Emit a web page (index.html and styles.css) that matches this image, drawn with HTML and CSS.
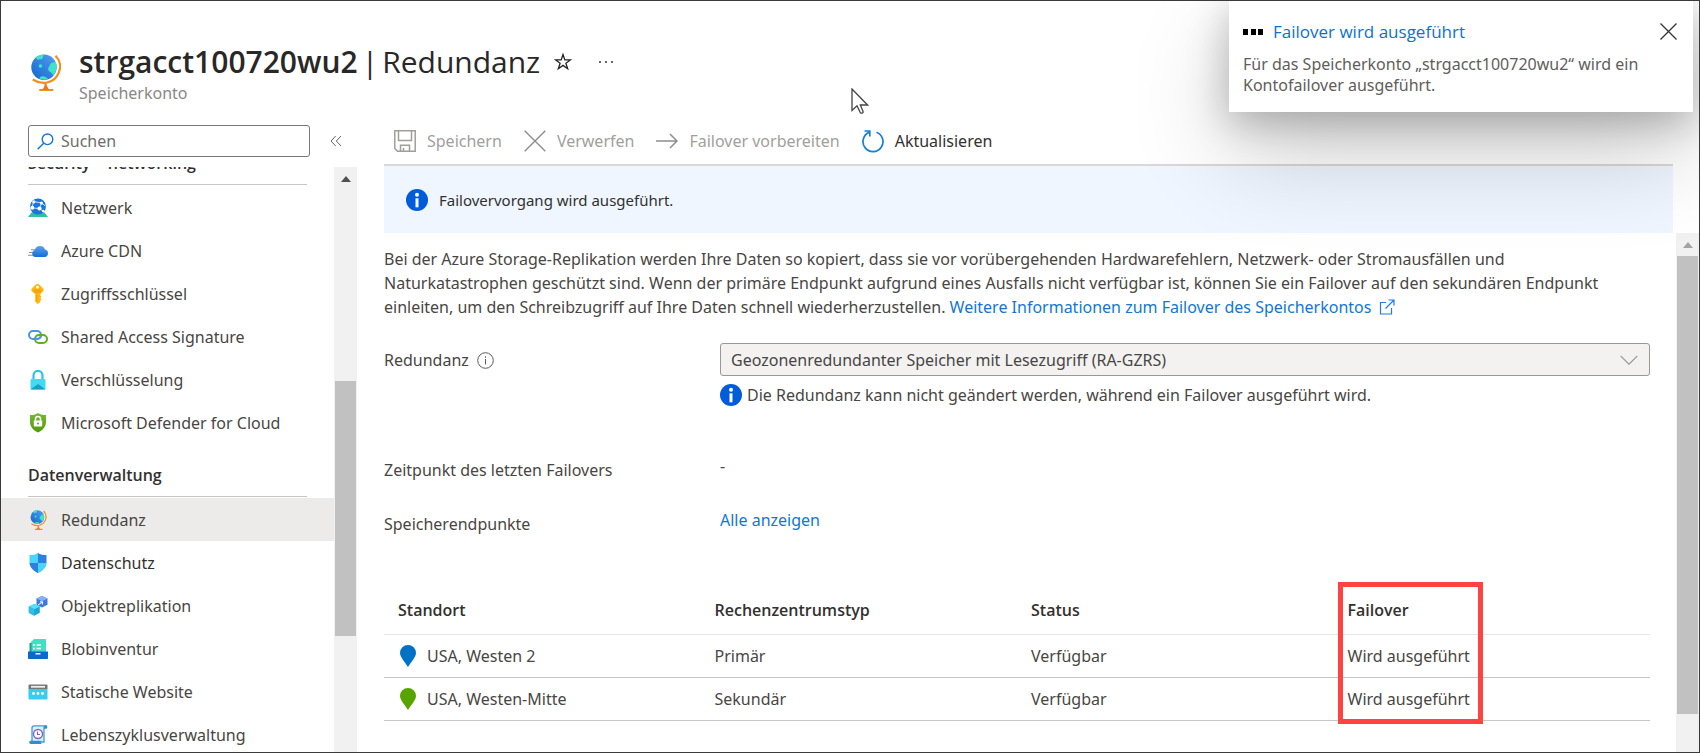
FILE: index.html
```html
<!DOCTYPE html>
<html lang="de">
<head>
<meta charset="utf-8">
<title>strgacct100720wu2 | Redundanz</title>
<link rel="stylesheet" href="styles.css">
</head>
<body>
<svg class="defs" aria-hidden="true">
  <defs>
    <linearGradient id="g-blue" x1="0" y1="0" x2="0" y2="1"><stop offset="0" stop-color="#5ea0ef"/><stop offset="1" stop-color="#0f6fd6"/></linearGradient>
    <linearGradient id="g-globe" x1="1" y1="0" x2="0" y2="1"><stop offset="0" stop-color="#559ff0"/><stop offset="1" stop-color="#1266cf"/></linearGradient>
    <linearGradient id="g-green" x1="0" y1="0" x2="0" y2="1"><stop offset="0" stop-color="#76bc2d"/><stop offset="1" stop-color="#4e9a0c"/></linearGradient>
    <symbol id="globe" viewBox="0 0 30 37">
      <circle cx="13" cy="13.300" r="12.700" fill="url(#g-globe)"/>
      <path d="M5 3.500C8 .8 11 .4 12.500.8c-.5 1.500-.3 3.400-1.600 4.300-1.200.6-1.900-.3-3 .3-.9.9-1.500.8-2.900-1.900zM25 8.500c1.300 4 .7 9-2.500 12.500-1.500-.2-1.400-2.200-3-3-1.800-.8-2.800-2-2.200-4 .4-1.500 1.500-1.700 1.600-3 .2-1.800 3.400-3.500 6.100-2.500zM8.500 24.500c.4-1.700 2-2.600 3.600-2.200 1.700.3 3.500.5 4.900 2.800-3 .8-5.500.8-8.500-.6z" fill="#3fe3c5"/>
      <circle cx="9.500" cy="12" r="1.800" fill="#3fe3c5"/>
      <path d="M24.500 1.800C29 6.500 30.300 13 27.500 19.200 23.500 28.500 12 32 1.800 25.500" fill="none" stroke="#f78d1e" stroke-width="2.200"/>
      <path d="M14.500 29v4M8.300 36h14" stroke="#f78d1e" stroke-width="2.200"/>
      <path d="M14.800 30l3.500 6h-7z" fill="#f2761c"/>
    </symbol>
    <symbol id="info" viewBox="0 0 22 22">
      <circle cx="11" cy="11" r="11" fill="#015cda"/>
      <circle cx="11" cy="5.800" r="2" fill="#fff"/>
      <path d="M9.500 9.300h3v9h-3z" fill="#fff"/>
    </symbol>
    <symbol id="pin" viewBox="0 0 16 22"><path d="M8 0a8 8 0 0 1 8 8c0 4-5 9-8 14C5 17 0 12 0 8a8 8 0 0 1 8-8z" fill="currentColor"/></symbol>
  </defs>
</svg>

<div class="app">
  <header class="header">
    <svg class="header-icon" aria-hidden="true"><use href="#globe"/></svg>
    <div class="heading">
      <div class="title-row">
        <h1><strong>strgacct100720wu2</strong><span>|</span><span>Redundanz</span></h1>
        <button class="icon-btn" aria-label="Favorit">
          <svg width="18" height="18" viewBox="0 0 18 18" fill="none" stroke="#222" stroke-width="1.300"><path d="M9 1.500l1.800 5.400h5.700l-4.600 3.400 1.700 5.400L9 12.400l-4.600 3.300 1.700-5.400-4.600-3.400h5.700z"/></svg>
        </button>
        <button class="icon-btn more" aria-label="Mehr">
          <svg width="16" height="4" viewBox="0 0 16 4" fill="#333"><circle cx="2" cy="2" r="1"/><circle cx="8" cy="2" r="1"/><circle cx="14" cy="2" r="1"/></svg>
        </button>
      </div>
      <p class="subtitle">Speicherkonto</p>
    </div>
  </header>

  <aside class="sidebar">
    <div class="search-row">
      <label class="search">
        <svg width="17" height="17" viewBox="0 0 17 17" fill="none" stroke="#1078d4" stroke-width="1.400" aria-hidden="true"><circle cx="10.500" cy="6.300" r="5.300"/><path d="M6.700 10.200L.6 16.300"/></svg>
        <input type="text" placeholder="Suchen" aria-label="Suchen">
      </label>
      <button class="icon-btn collapse" aria-label="Menü reduzieren">
        <svg width="12" height="12" viewBox="0 0 12 12" fill="none" stroke="#666" stroke-width="1"><path d="M5.700 1L1 6l4.700 5M11 1L6.300 6 11 11"/></svg>
      </button>
    </div>
    <div class="menu-wrap">
      <nav class="menu">
        <h2 class="first">Security + networking</h2>
        <ul>
          <li><a href="#"><svg viewBox="0 0 20 20"><path d="M3.500 14.500h13l3.500 4.500H0z" fill="#2fc0a0"/><circle cx="10" cy="8.500" r="8" fill="#1b74dc"/><g stroke="#bfe0ff" stroke-width="1" fill="none"><path d="M5.500 3.500l8 1.500M13.500 5l-2 5.500M11.500 10.500L4 10M11.500 10.500l4 3M5.500 3.500L4 10M13.500 5l4 3"/></g><g fill="#fff"><circle cx="5.800" cy="3.800" r="1.600"/><circle cx="13.500" cy="5" r="1.500"/><circle cx="4.300" cy="9.800" r="2"/><circle cx="11.500" cy="10.500" r="2.100"/><circle cx="15.300" cy="13" r="1.300"/></g></svg>Netzwerk</a></li>
          <li><a href="#"><svg viewBox="0 0 20 20"><path d="M3 8.800h5M1 11.500h6M0 14.200h7" stroke="#8d8d8d" stroke-width="1.100"/><path d="M7.500 16a3.500 3.500 0 0 1-.6-6.900A5.300 5.300 0 0 1 17 8.500a3.800 3.800 0 0 1-.5 7.500z" fill="url(#g-blue)"/></svg>Azure CDN</a></li>
          <li><a href="#"><svg viewBox="0 0 20 20"><path d="M9.500 0c1 0 2 .6 3 1.700l2.400 2.500c1 1 1 2.300.1 3.300L12.300 10v1.500l1.200 1.200-1.200 1.200 1.200 1.300-1.200 1.300v1.700L9.500 20l-2.300-2.300V10L4 7.500c-.9-1-.9-2.200.1-3.300l2.400-2.500C7.500.6 8.500 0 9.500 0z" fill="#ffb70f"/><circle cx="9.500" cy="3" r="1.500" fill="#fff"/><path d="M6 6.200h7M6 8h7" stroke="#f08c00" stroke-width=".8"/><path d="M8.800 11v6" stroke="#ff9300"/></svg>Zugriffsschlüssel</a></li>
          <li><a href="#"><svg viewBox="0 0 20 20" fill="none" stroke-width="2"><rect x="1" y="4" width="12" height="8" rx="4" stroke="#4a93ec"/><rect x="7" y="8" width="12" height="8" rx="4" stroke="#62ad1f"/><path d="M13 8a4 4 0 0 1-4 4H6" stroke="#4a93ec"/></svg>Shared Access Signature</a></li>
          <li><a href="#"><svg viewBox="0 0 20 20"><path d="M5.500 10V5.500a4.500 4.500 0 0 1 9 0V10" fill="none" stroke="#26c3ea" stroke-width="2.200"/><rect x="2.500" y="9" width="15" height="10.500" rx="1" fill="#43d9fa"/><path d="M2.500 19.500L10 14l7.500 5.500z" fill="#1b9ec4"/></svg>Verschlüsselung</a></li>
          <li><a href="#"><svg viewBox="0 0 20 20"><path d="M10 0c2.500 1.700 5 2 8 2v7c0 5.500-4.500 8.800-8 10.500C6.500 17.800 2 14.500 2 9V2c3 0 5.500-.3 8-2z" fill="url(#g-green)"/><rect x="5.800" y="7.500" width="8.400" height="6" rx=".8" fill="#fff"/><path d="M7.500 8V6a2.500 2.500 0 0 1 5 0v2" fill="none" stroke="#fff" stroke-width="1.500"/><circle cx="10" cy="10.500" r="1" fill="#59a514"/></svg>Microsoft Defender for Cloud</a></li>
        </ul>
        <h2>Datenverwaltung</h2>
        <ul>
          <li><a href="#" class="active" aria-current="page"><svg viewBox="0 0 20 20"><use href="#globe" x="2" y="0" width="17" height="20"/></svg>Redundanz</a></li>
          <li><a href="#" class="visited"><svg viewBox="0 0 20 20"><path d="M10 0c2.500 1.700 5 2 8.500 2v7c0 5.500-5 9.300-8.500 11z" fill="#2f7fe0"/><path d="M10 0C7.500 1.700 5 2 1.500 2v7c0 5.500 5 9.300 8.500 11z" fill="#48d6f8"/><path d="M1.500 10H10v10C6.500 18.300 2 15 1.500 10z" fill="#2f7fe0"/><path d="M18.500 10H10v10c3.500-1.700 8-5 8.500-10z" fill="#48d6f8"/></svg>Datenschutz</a></li>
          <li><a href="#"><svg viewBox="0 0 20 20"><path d="M14 0l5.500 2.500v6.300L14 11.500 8.500 8.800V2.500z" fill="#3c78e0"/><path d="M14 0l5.500 2.500L14 5.300 8.500 2.500z" fill="#84b1f5"/><path d="M6.300 8l5.500 2.500v6.200L6.300 19.700.8 16.800v-6.300z" fill="#1fa7d4"/><path d="M6.300 8l5.500 2.500-5.500 2.800-5.500-2.800z" fill="#50e2f7"/><path d="M.8 10.500l5.500 2.800v6.400L.8 16.800z" fill="#30bfe6"/><path d="M10 9l4.500-3M12 5.800l2.700.1-.4 2.600" stroke="#fff" fill="none" stroke-width="1"/></svg>Objektreplikation</a></li>
          <li><a href="#"><svg viewBox="0 0 20 20"><path d="M6 0h11c.6 0 1 .4 1 1v12H3V3z" fill="#42e0c3"/><path d="M1.500 4h2v9h-2z" fill="#1a9f88"/><path d="M5 6h2M8.500 6H13M5 9.500h2M8.500 9.500H13" stroke="#fff" stroke-width="1.400"/><path d="M0 12.500h20V19c0 .6-.4 1-1 1H1c-.6 0-1-.4-1-1z" fill="#0b68cf"/><path d="M7.500 14.800h5" stroke="#fff" stroke-width="1.400"/></svg>Blobinventur</a></li>
          <li><a href="#"><svg viewBox="0 0 20 20"><path d="M.5 7h19v9.500c0 .6-.4 1-1 1h-17c-.6 0-1-.4-1-1z" fill="#37cdf3"/><path d="M1.500 2.500h17c.6 0 1 .4 1 1V7H.5V3.500c0-.6.400-1 1-1z" fill="#767676"/><path d="M3 4.800h14" stroke="#eee" stroke-width="1.800"/><g fill="#fff"><circle cx="5.500" cy="11.500" r="1.400"/><circle cx="10" cy="11.500" r="1.400"/><circle cx="14.500" cy="11.500" r="1.400"/></g></svg>Statische Website</a></li>
          <li><a href="#"><svg viewBox="0 0 20 20"><path d="M6 .8h12v1.700h-2V17H4V3c0-1.200.8-2.200 2-2.200z" fill="#d9effb" stroke="#3b9fd1" stroke-width="1.300"/><path d="M18 .3a1.800 1.800 0 0 1 0 3.500h-1.800V1zM2.500 15.700H13c-.6 1.200-.2 2.700 1 3.300H2.500a1.700 1.700 0 0 1 0-3.300z" fill="#2f8fc6"/><circle cx="10" cy="9" r="4.500" fill="#fff" stroke="#8661c5" stroke-width="1.400"/><path d="M9.500 6.500v3H12" fill="none" stroke="#8661c5" stroke-width="1.200"/></svg>Lebenszyklusverwaltung</a></li>
        </ul>
      </nav>
      <div class="scrollbar" aria-hidden="true"><i class="arrow"></i><i class="thumb"></i></div>
    </div>
  </aside>

  <main class="main">
    <div class="toolbar">
      <button disabled><svg width="22" height="22" viewBox="0 0 22 22" fill="none" stroke="#a09e9c" stroke-width="1.500"><path d="M.8.800h20.400v20.400H3.500L.8 18.500zM4.500 1v9.500h13V1M6.500 21v-5.700h9V21M9.500 21v-3"/></svg>Speichern</button>
      <button disabled><svg width="22" height="22" viewBox="0 0 22 22" fill="none" stroke="#8f8d8b" stroke-width="1.400"><path d="M.7.700l20.600 20.600M21.300.700L.7 21.300"/></svg>Verwerfen</button>
      <button disabled><svg width="22" height="22" viewBox="0 0 22 22" fill="none" stroke="#8f8d8b" stroke-width="1.500"><path d="M0 11h21M14 4l7 7-7 7"/></svg>Failover vorbereiten</button>
      <button><svg width="22" height="24" viewBox="0 0 22 24" fill="none" stroke="#1080dc" stroke-width="1.700"><path d="M14.500 3.200A10 10 0 1 1 7 3.400M2.500 2h5.300v5.500"/></svg>Aktualisieren</button>
    </div>
    <div class="banner" role="status"><svg width="22" height="22" aria-hidden="true"><use href="#info"/></svg>Failovervorgang wird ausgeführt.</div>
    <div class="body">
      <div class="content">
        <p class="intro">Bei der Azure Storage-Replikation werden Ihre Daten so kopiert, dass sie vor vorübergehenden Hardwarefehlern, Netzwerk- oder Stromausfällen und Naturkatastrophen geschützt sind. Wenn der primäre Endpunkt aufgrund eines Ausfalls nicht verfügbar ist, können Sie ein Failover auf den sekundären Endpunkt einleiten, um den Schreibzugriff auf Ihre Daten schnell wiederherzustellen. <a href="#">Weitere Informationen zum Failover des Speicherkontos<svg class="ext" width="16" height="16" viewBox="0 0 16 16" fill="none" stroke="#1b7fdb" stroke-width="1.200" aria-hidden="true"><path d="M7 3.500H1.500V15h11V9M6.500 9.500l8-8M9.500 1h5.500v5.500"/></svg></a></p>
        <div class="fields">
          <div class="label"><label for="redundancy">Redundanz</label><svg width="17" height="17" viewBox="0 0 17 17" fill="none" stroke="#5c5c5c" aria-hidden="true"><circle cx="8.500" cy="8.500" r="7.800"/><path d="M8.500 7v5.500M8.500 4.300v1.500"/></svg></div>
          <div class="control">
            <div class="select-wrap">
              <select id="redundancy" disabled><option>Geozonenredundanter Speicher mit Lesezugriff (RA-GZRS)</option></select>
              <svg class="caret" width="18" height="10" viewBox="0 0 18 10" fill="none" stroke="#9a9896" stroke-width="1.200" aria-hidden="true"><path d="M.6.800L9 9.200 17.400.8"/></svg>
            </div>
            <p class="hint"><svg width="22" height="22" aria-hidden="true"><use href="#info"/></svg>Die Redundanz kann nicht geändert werden, während ein Failover ausgeführt wird.</p>
          </div>
          <div class="label">Zeitpunkt des letzten Failovers</div>
          <div class="value">-</div>
          <div class="label">Speicherendpunkte</div>
          <div class="value"><a href="#">Alle anzeigen</a></div>
        </div>
        <div class="table-wrap">
          <table>
            <thead><tr><th>Standort</th><th>Rechenzentrumstyp</th><th>Status</th><th><span class="mark-anchor">Failover<i class="mark"></i></span></th></tr></thead>
            <tbody>
              <tr><td><span class="loc"><svg class="blue" width="16" height="22"><use href="#pin"/></svg>USA, Westen 2</span></td><td>Primär</td><td>Verfügbar</td><td>Wird ausgeführt</td></tr>
              <tr><td><span class="loc"><svg class="green" width="16" height="22"><use href="#pin"/></svg>USA, Westen-Mitte</span></td><td>Sekundär</td><td>Verfügbar</td><td>Wird ausgeführt</td></tr>
            </tbody>
          </table>
        </div>
      </div>
      <div class="scrollbar light" aria-hidden="true"><i class="arrow"></i><i class="thumb"></i></div>
    </div>
  </main>

  <section class="toast" role="alert">
    <div class="toast-head">
      <svg width="21" height="10" viewBox="0 0 21 10" aria-hidden="true"><path d="M0 3h5v6H0zM8 3h5v6H8zM15 3h5v6h-5z"/></svg>
      <a href="#">Failover wird ausgeführt</a>
      <button class="icon-btn" aria-label="Schließen"><svg width="17" height="17" viewBox="0 0 17 17" stroke="#333" stroke-width="1.300"><path d="M.5.500l16 16M16.500.500l-16 16"/></svg></button>
    </div>
    <p>Für das Speicherkonto „strgacct100720wu2“ wird ein Kontofailover ausgeführt.</p>
  </section>

  <svg class="pointer" width="18" height="27" viewBox="0 0 18 27" aria-hidden="true"><path d="M1 1v21.500l5-4.700 3.500 7.200c1.800.6 3-.3 2.600-1.500L9.300 17H16.500z" fill="#fff" stroke="#444" stroke-width="1.300"/></svg>
</div>
</body>
</html>
```
FILE: styles.css
```css
* { box-sizing: border-box; }

body {
  margin: 0;
  background: #fff;
  color: #484644;
  font: 16px/24px "Noto Sans", "Open Sans", sans-serif;
}

h1, h2, p, ul { margin: 0; padding: 0; font-weight: 400; }
ul { list-style: none; }
a { color: #1078d4; text-decoration: none; }
svg { flex: none; }
button, input, select { font: inherit; color: inherit; }
h1, h2, th, .toast-head { font-family: "Open Sans", "Noto Sans", sans-serif; }
.defs { position: absolute; width: 0; height: 0; }

.app {
  position: relative;
  display: grid;
  grid-template: auto 1fr / 356px 1fr;
  height: 100vh;
  border: 1px solid #3a3a3a;
  overflow: hidden;
}

.icon-btn {
  display: flex;
  padding: 0;
  border: 0;
  background: none;
}

/* Header */
.header {
  grid-column: 1 / -1;
  display: flex;
  gap: 18px;
  padding: 40px 30px 0;
  height: 124px;
}
.header-icon { width: 30px; height: 37px; margin-top: 13px; }
.title-row { display: flex; align-items: center; gap: 14px; height: 42px; }
h1 {
  display: flex;
  gap: 4px;
  font-size: 30px;
  line-height: 42px;
  color: #292827;
  white-space: nowrap;
}
h1 strong { font-weight: 600; }
.more { margin-left: 12px; }
.subtitle { color: #8a8886; line-height: 20px; }

/* Sidebar */
.sidebar { display: flex; flex-direction: column; min-height: 0; }
.search-row { display: flex; align-items: center; gap: 20px; padding-left: 27px; }
.search {
  display: flex;
  align-items: center;
  gap: 7px;
  width: 282px;
  height: 32px;
  padding: 0 8px;
  border: 1px solid #7a7876;
  border-radius: 3px;
}
.search input { flex: 1; min-width: 0; border: 0; outline: 0; padding: 0; background: none; }
.search input::placeholder { color: #6f6d6b; opacity: 1; }
.menu-wrap { flex: 1; display: flex; min-height: 0; margin-top: 10px; }
.menu { flex: 1; overflow: hidden; }
.menu h2 {
  margin: 0 27px;
  padding: 19px 0 9px;
  border-bottom: 1px solid #c8c6c4;
  font-size: 16px;
  font-weight: 600;
  line-height: 24px;
  color: #323130;
}
.menu .first { margin-top: -35px; }
.menu a {
  display: flex;
  align-items: center;
  gap: 13px;
  height: 43px;
  padding-left: 27px;
  color: #484644;
  white-space: nowrap;
}
.menu a svg { width: 20px; height: 20px; }
.menu a.active { background: #edebe9; }
.menu a.visited { color: #323130; }
.menu h2 + ul { padding-top: 1px; }

.scrollbar { display: flex; flex-direction: column; width: 23px; background: #f1f1f1; }
.scrollbar .arrow {
  align-self: center;
  margin-top: 9px;
  border: 5px solid transparent;
  border-top: 0;
  border-bottom: 6px solid #505050;
}
.scrollbar .thumb { margin: 199px 1px 0; height: 255px; background: #c1c1c1; }
.scrollbar.light .arrow { border-bottom-color: #a3a3a3; }
.scrollbar.light .thumb { flex: 1; margin: 8px 1px 38px; height: auto; }

/* Main column */
.main { display: flex; flex-direction: column; min-width: 0; padding-left: 27px; }
.toolbar {
  display: flex;
  align-items: center;
  gap: 22px;
  height: 41px;
  margin-right: 26px;
  padding: 0 0 8px 10px;
  border-bottom: 2px solid #d8d8d8;
}
.toolbar button {
  display: flex;
  align-items: center;
  gap: 11px;
  padding: 0;
  border: 0;
  background: none;
  color: #323130;
  white-space: nowrap;
}
.toolbar button:disabled { color: #a19f9d; }
.banner {
  display: flex;
  align-items: center;
  gap: 11px;
  height: 67px;
  margin-right: 26px;
  padding-left: 22px;
  background: #eff6ff;
  color: #323130;
  font-size: 15px;
}
.body { flex: 1; display: flex; gap: 26px; min-height: 0; }
.content { flex: 1; min-width: 0; padding-top: 14px; }
.intro { padding-right: 20px; }
.ext { margin-left: 8px; vertical-align: -2px; }

.fields {
  display: grid;
  grid-template-columns: 336px 1fr;
  margin-top: 24px;
}
.label { display: flex; align-items: center; gap: 8px; height: 34px; }
.select-wrap { position: relative; }
select {
  appearance: none;
  display: block;
  width: 100%;
  height: 33px;
  padding: 0 40px 0 10px;
  border: 1px solid #9a9896;
  border-radius: 3px;
  background: #f3f2f1;
  color: #484644;
  opacity: 1;
}
.caret { position: absolute; right: 12px; top: 12px; pointer-events: none; }
.hint { display: flex; align-items: center; gap: 5px; height: 22px; margin: 8px 0 37px; }
.fields .label:nth-child(n + 3), .value { height: 54px; }
.value { padding-top: 11px; }

/* Locations */
.table-wrap { margin-top: 36px; }
table { width: 100%; table-layout: fixed; border-collapse: collapse; }
th, td { padding: 0 0 0 14px; text-align: left; white-space: nowrap; }
th { height: 47px; border-bottom: 1px solid #e6e6e6; font-weight: 600; color: #323130; }
td { height: 43px; border-bottom: 1px solid #c8c6c4; }
.loc { display: flex; align-items: center; gap: 11px; padding-left: 2px; }
.blue { color: #0072c6; }
.green { color: #57a300; }
.mark-anchor { position: relative; }
.mark {
  position: absolute;
  left: -10px;
  top: -17px;
  width: 145px;
  height: 142px;
  border: 5px solid #ff4343;
}

/* Notification */
.toast {
  position: absolute;
  top: 0;
  right: 6px;
  width: 464px;
  padding: 17px 16px 16px 14px;
  background: #fff;
  box-shadow: 0 40px 100px rgba(0, 0, 0, .2), 0 10px 40px rgba(0, 0, 0, .26);
  color: #605e5c;
  line-height: 21px;
}
.toast-head { display: flex; align-items: center; gap: 9px; height: 26px; }
.toast-head a { flex: 1; font-size: 17px; color: #0b72d0; }
.toast p { margin-top: 10px; }

.pointer { position: absolute; left: 850px; top: 87px; }
```
